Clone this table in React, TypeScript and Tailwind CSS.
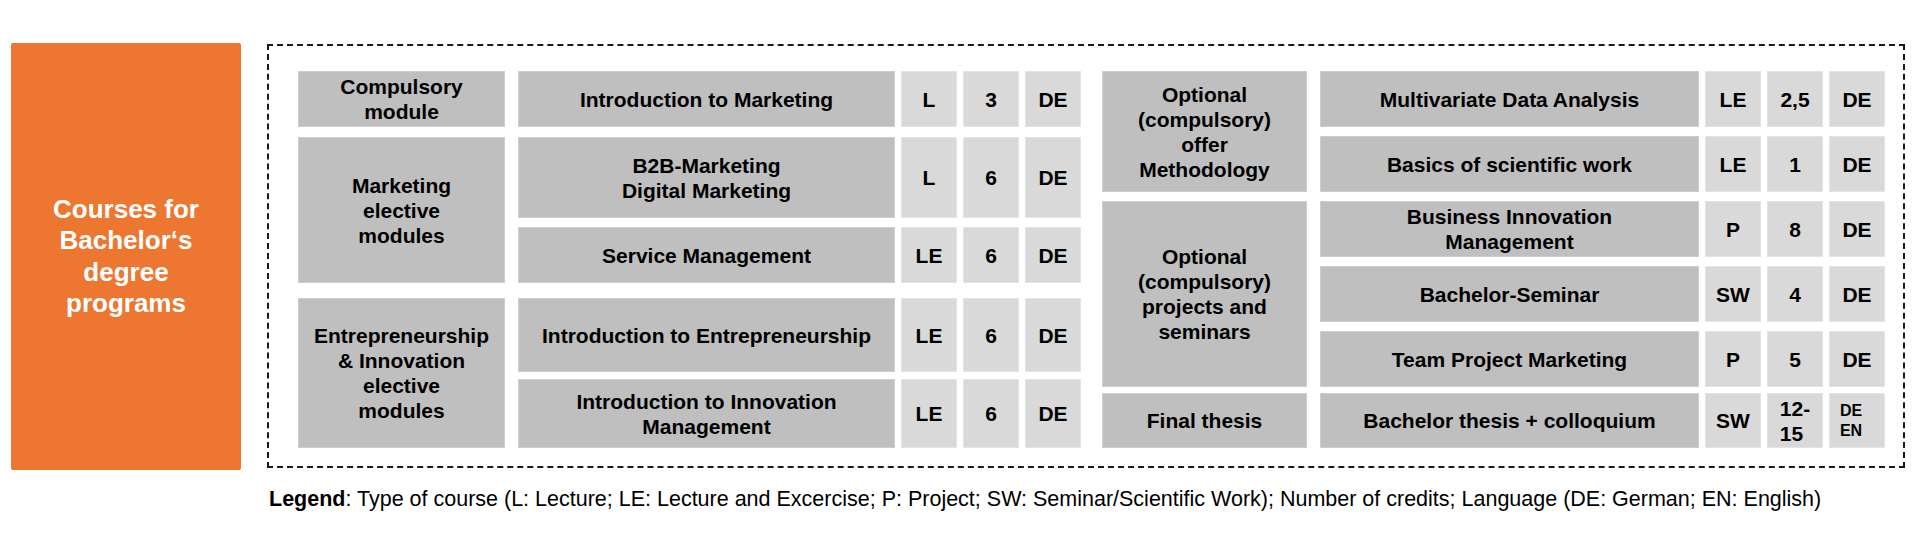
import type { ReactNode } from "react";

type Course = {
  title: ReactNode;
  type: string;
  credits: ReactNode;
  lang: ReactNode;
  h: string;
};

type Group = {
  label: ReactNode;
  h: string;
  gap: string;
  courses: Course[];
};

const leftGroups: Group[] = [
  {
    label: <>Compulsory<br />module</>,
    h: "h-[56px]",
    gap: "gap-[9px]",
    courses: [{ title: "Introduction to Marketing", type: "L", credits: "3", lang: "DE", h: "h-[56px]" }],
  },
  {
    label: <>Marketing<br />elective<br />modules</>,
    h: "h-[146px]",
    gap: "gap-[9px]",
    courses: [
      { title: <>B2B-Marketing<br />Digital Marketing</>, type: "L", credits: "6", lang: "DE", h: "h-[81px]" },
      { title: "Service Management", type: "LE", credits: "6", lang: "DE", h: "h-[56px]" },
    ],
  },
  {
    label: <>Entrepreneurship<br />&amp; Innovation<br />elective<br />modules</>,
    h: "h-[150px]",
    gap: "gap-[7px]",
    courses: [
      { title: "Introduction to Entrepreneurship", type: "LE", credits: "6", lang: "DE", h: "h-[74px]" },
      { title: <>Introduction to Innovation<br />Management</>, type: "LE", credits: "6", lang: "DE", h: "h-[69px]" },
    ],
  },
];

const rightGroups: Group[] = [
  {
    label: <>Optional<br />(compulsory)<br />offer<br />Methodology</>,
    h: "h-[121px]",
    gap: "gap-[9px]",
    courses: [
      { title: "Multivariate Data Analysis", type: "LE", credits: "2,5", lang: "DE", h: "h-[56px]" },
      { title: "Basics of scientific work", type: "LE", credits: "1", lang: "DE", h: "h-[56px]" },
    ],
  },
  {
    label: <>Optional<br />(compulsory)<br />projects and<br />seminars</>,
    h: "h-[186px]",
    gap: "gap-[9px]",
    courses: [
      { title: <>Business Innovation<br />Management</>, type: "P", credits: "8", lang: "DE", h: "h-[56px]" },
      { title: "Bachelor-Seminar", type: "SW", credits: "4", lang: "DE", h: "h-[56px]" },
      { title: "Team Project Marketing", type: "P", credits: "5", lang: "DE", h: "h-[56px]" },
    ],
  },
  {
    label: "Final thesis",
    h: "h-[55px]",
    gap: "gap-[9px]",
    courses: [
      {
        title: "Bachelor thesis + colloquium",
        type: "SW",
        credits: <span className="block text-left">12-<br />15</span>,
        lang: <span className="block pr-[12px] text-left text-[16px] leading-[20px]">DE<br />EN</span>,
        h: "h-[55px]",
      },
    ],
  },
];

const dark = "flex items-center justify-center text-center bg-[#bfbfbf] border border-[#cdcdcd]";
const light = "flex items-center justify-center text-center bg-[#d9d9d9] border border-[#e4e4e4] w-[56px]";

function Half({ groups, catW, courseW, gaps }: { groups: Group[]; catW: string; courseW: string; gaps: string[] }) {
  return (
    <div className="flex flex-col">
      {groups.map((g, i) => (
        <div key={i} className={`flex gap-[13px] ${g.h} ${gaps[i]}`}>
          <div className={`${dark} ${catW} h-full`}>{g.label}</div>
          <div className={`flex flex-col ${g.gap}`}>
            {g.courses.map((c, j) => (
              <div key={j} className={`flex gap-[6px] ${c.h}`}>
                <div className={`${dark} ${courseW}`}>{c.title}</div>
                <div className={light}>{c.type}</div>
                <div className={light}>{c.credits}</div>
                <div className={light}>{c.lang}</div>
              </div>
            ))}
          </div>
        </div>
      ))}
    </div>
  );
}

export default function App() {
  return (
    <div className="w-[1920px] h-[560px] bg-white text-black font-['Liberation_Sans',Arial,sans-serif]">
      <div className="flex pt-[43px] pl-[11px]">
        <div className="w-[230px] h-[427px] bg-[#ed7731] rounded-[2px] flex items-center justify-center text-center text-white font-bold text-[26px] leading-[31.5px]">
          Courses for<br />Bachelor‘s<br />degree<br />programs
        </div>
        <div className="ml-[26px] mt-[1px] w-[1638px] h-[424px] border-2 border-dashed border-[#1a1a1a] pl-[29px] pt-[25px]">
          <div className="flex gap-[21px] font-bold text-[21px] leading-[25px]">
            <Half groups={leftGroups} catW="w-[207px]" courseW="w-[377px]" gaps={["mb-[10px]", "mb-[15px]", ""]} />
            <Half groups={rightGroups} catW="w-[205px]" courseW="w-[379px]" gaps={["mb-[9px]", "mb-[6px]", ""]} />
          </div>
        </div>
      </div>
      <p className="pl-[269px] mt-[17px] text-[21.5px] leading-[25px] whitespace-nowrap">
        <span className="font-bold">Legend</span>: Type of course (L: Lecture; LE: Lecture and Excercise; P: Project; SW: Seminar/Scientific Work); Number of credits; Language (DE: German; EN: English)
      </p>
    </div>
  );
}
